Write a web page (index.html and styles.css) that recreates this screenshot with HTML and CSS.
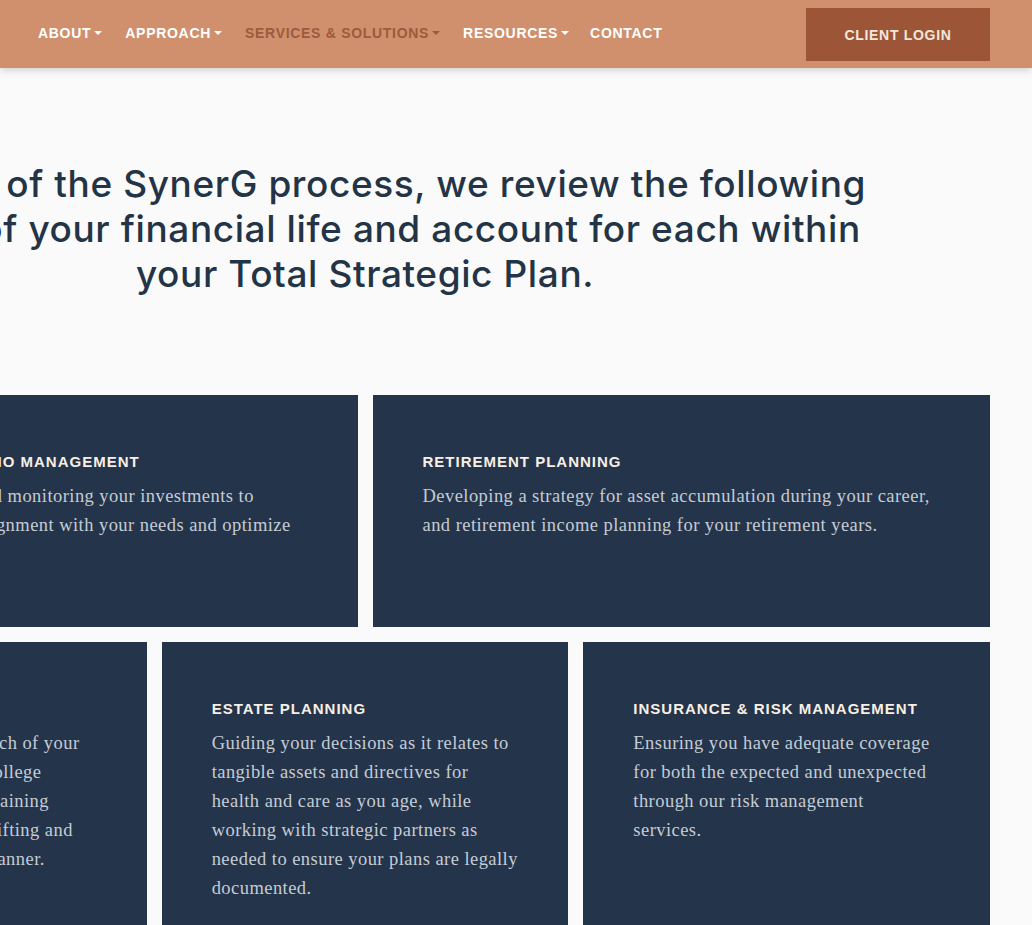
FILE: index.html
```html
<!DOCTYPE html>
<html lang="en">
<head>
<meta charset="utf-8">
<title>SynerG Process</title>
<link rel="stylesheet" href="styles.css">
</head>
<body>
<header class="site-header">
  <nav class="main-nav">
    <a class="nav-link has-caret" href="#">ABOUT</a>
    <a class="nav-link has-caret" href="#">APPROACH</a>
    <a class="nav-link has-caret active" href="#">SERVICES &amp; SOLUTIONS</a>
    <a class="nav-link has-caret" href="#">RESOURCES</a>
    <a class="nav-link" href="#">CONTACT</a>
  </nav>
  <a class="login-btn" href="#">CLIENT LOGIN</a>
</header>

<main class="content">
  <h2 class="intro">As part of the SynerG process, we review the following<br>areas of your financial life and account for each within<br>your Total Strategic Plan.</h2>

  <div class="row row-two">
    <div class="card">
      <h3 class="card-title">INVESTMENT &amp; PORTFOLIO MANAGEMENT</h3>
      <p class="card-text">Selecting, rebalancing, and monitoring your investments to<br>to maintain an ongoing alignment with your needs and optimize<br>returns.</p>
    </div>
    <div class="card">
      <h3 class="card-title">RETIREMENT PLANNING</h3>
      <p class="card-text">Developing a strategy for asset accumulation during your career,<br>and retirement income planning for your retirement years.</p>
    </div>
  </div>

  <div class="row row-three">
    <div class="card">
      <h3 class="card-title">EDUCATION PLANNING</h3>
      <p class="card-text">Planning and saving for each of your<br>children's education and college<br>expenses, while also maintaining<br>your long-term goals for gifting and<br>estates in a tax-efficient manner.</p>
    </div>
    <div class="card">
      <h3 class="card-title">ESTATE PLANNING</h3>
      <p class="card-text">Guiding your decisions as it relates to<br>tangible assets and directives for<br>health and care as you age, while<br>working with strategic partners as<br>needed to ensure your plans are legally<br>documented.</p>
    </div>
    <div class="card">
      <h3 class="card-title">INSURANCE &amp; RISK MANAGEMENT</h3>
      <p class="card-text">Ensuring you have adequate coverage<br>for both the expected and unexpected<br>through our risk management<br>services.</p>
    </div>
  </div>
</main>
</body>
</html>
```

FILE: styles.css
```css
html, body {
  margin: 0;
  padding: 0;
}
body {
  background: #fafafa;
  overflow-x: hidden;
  font-family: "Liberation Sans", Arial, sans-serif;
}

.site-header {
  height: 68px;
  background: #d0906e;
  display: flex;
  align-items: center;
  justify-content: space-between;
  padding: 0 42px 0 38px;
  box-shadow: 0 2px 8px rgba(0, 0, 0, 0.18);
  position: relative;
  z-index: 2;
}

.main-nav {
  display: flex;
  align-items: center;
  gap: 23px;
  margin-top: -2px;
}

.nav-link {
  color: #ffffff;
  text-decoration: none;
  font-weight: 700;
  font-size: 14px;
  letter-spacing: 0.7px;
  display: flex;
  align-items: center;
}
.nav-link.active {
  color: #9e5a3c;
}
.nav-link:last-child {
  margin-left: -2px;
}
.has-caret::after {
  content: "";
  display: inline-block;
  margin-left: 3px;
  border-left: 4px solid transparent;
  border-right: 4px solid transparent;
  border-top: 4px solid currentColor;
}

.login-btn {
  width: 184px;
  height: 53px;
  background: #9c5637;
  color: #f3e7db;
  text-decoration: none;
  font-weight: 700;
  font-size: 14px;
  letter-spacing: 0.7px;
  display: flex;
  align-items: center;
  justify-content: center;
  padding-top: 1px;
  box-sizing: border-box;
}

.content {
  width: 1250px;
  margin-left: -260px;
}

.intro {
  margin: 93px 0 99px;
  text-align: center;
  font-family: Inter, "Noto Sans", sans-serif;
  font-weight: 500;
  font-size: 37px;
  line-height: 45px;
  color: #243447;
  white-space: nowrap;
  letter-spacing: 0.6px;
}

.row {
  display: grid;
  gap: 15px;
  margin-bottom: 15px;
}
.row-two {
  grid-template-columns: 1fr 1fr;
}
.row-three {
  grid-template-columns: 1fr 1fr 1fr;
}

.card {
  background: #24344a;
  padding: 55px 50px 58px;
  white-space: nowrap;
  overflow: hidden;
}

.card-title {
  margin: 0 0 8px;
  font-family: "Liberation Sans", Arial, sans-serif;
  font-weight: 700;
  font-size: 15px;
  line-height: 24px;
  letter-spacing: 1px;
  color: #f7efe4;
}

.card-text {
  margin: 0;
  font-family: "Liberation Serif", "Times New Roman", serif;
  font-size: 18.5px;
  letter-spacing: 0.45px;
  line-height: 29px;
  color: #c4ccd5;
}
```
